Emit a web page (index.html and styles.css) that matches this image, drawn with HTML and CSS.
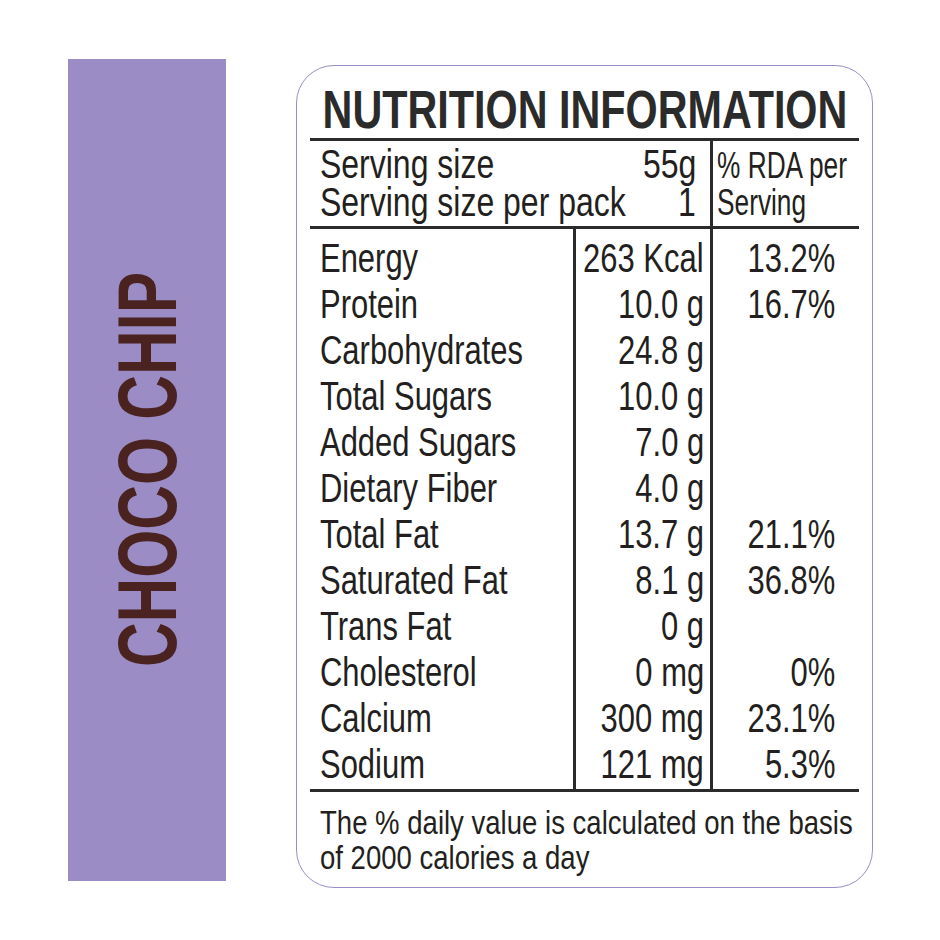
FILE: index.html
```html
<!DOCTYPE html>
<html>
<head>
<meta charset="utf-8">
<link rel="stylesheet" href="styles.css">
</head>
<body>
<div class="page">
  <div class="side"><span class="side-text">CHOCO CHIP</span></div>
  <div class="card">
    <h1 class="title"><span>NUTRITION INFORMATION</span></h1>
    <div class="serving">
      <div class="serving-main">
        <div class="srow"><span class="l">Serving size</span><span class="r">55g</span></div>
        <div class="srow"><span class="l">Serving size per pack</span><span class="r">1</span></div>
      </div>
      <div class="serving-rda">
        <div class="cell"><span>% RDA per</span></div>
        <div class="cell"><span>Serving</span></div>
      </div>
    </div>
    <div class="table">
      <div class="col col-label">
        <div class="cell"><span>Energy</span></div>
        <div class="cell"><span>Protein</span></div>
        <div class="cell"><span>Carbohydrates</span></div>
        <div class="cell"><span>Total Sugars</span></div>
        <div class="cell"><span>Added Sugars</span></div>
        <div class="cell"><span>Dietary Fiber</span></div>
        <div class="cell"><span>Total Fat</span></div>
        <div class="cell"><span>Saturated Fat</span></div>
        <div class="cell"><span>Trans Fat</span></div>
        <div class="cell"><span>Cholesterol</span></div>
        <div class="cell"><span>Calcium</span></div>
        <div class="cell"><span>Sodium</span></div>
      </div>
      <div class="col col-val">
        <div class="cell right"><span>263 Kcal</span></div>
        <div class="cell right"><span>10.0 g</span></div>
        <div class="cell right"><span>24.8 g</span></div>
        <div class="cell right"><span>10.0 g</span></div>
        <div class="cell right"><span>7.0 g</span></div>
        <div class="cell right"><span>4.0 g</span></div>
        <div class="cell right"><span>13.7 g</span></div>
        <div class="cell right"><span>8.1 g</span></div>
        <div class="cell right"><span>0 g</span></div>
        <div class="cell right"><span>0 mg</span></div>
        <div class="cell right"><span>300 mg</span></div>
        <div class="cell right"><span>121 mg</span></div>
      </div>
      <div class="col col-pct">
        <div class="cell right"><span>13.2%</span></div>
        <div class="cell right"><span>16.7%</span></div>
        <div class="cell right"><span>&nbsp;</span></div>
        <div class="cell right"><span>&nbsp;</span></div>
        <div class="cell right"><span>&nbsp;</span></div>
        <div class="cell right"><span>&nbsp;</span></div>
        <div class="cell right"><span>21.1%</span></div>
        <div class="cell right"><span>36.8%</span></div>
        <div class="cell right"><span>&nbsp;</span></div>
        <div class="cell right"><span>0%</span></div>
        <div class="cell right"><span>23.1%</span></div>
        <div class="cell right"><span>5.3%</span></div>
      </div>
    </div>
    <div class="note">
      <div class="cell"><span>The % daily value is calculated on the basis</span></div>
      <div class="cell"><span>of 2000 calories a day</span></div>
    </div>
  </div>
</div>
</body>
</html>
```

FILE: styles.css
```css
* { box-sizing: border-box; }
html, body { margin: 0; padding: 0; background: #fff; }
body {
  width: 940px;
  height: 940px;
  overflow: hidden;
  font-family: "Liberation Sans", Arial, sans-serif;
  color: #231f20;
}
.page {
  display: flex;
  align-items: flex-start;
  padding: 59px 0 0 68px;
}
.side {
  width: 158px;
  height: 822px;
  background: #9b8cc6;
  display: flex;
  align-items: center;
  justify-content: center;
}
.side-text {
  flex: none;
  white-space: nowrap;
  font-weight: bold;
  font-size: 83px;
  line-height: 1;
  color: #4a2321;
  transform: rotate(-90deg) scaleX(0.745);
  margin-top: -2px;
}
.card {
  margin: 6px 0 0 70px;
  width: 577px;
  height: 823px;
  border: 1.5px solid #9b8cc6;
  border-radius: 38px;
  padding: 0 13px;
}
.title {
  margin: 14px 0 0;
  display: flex;
  justify-content: center;
  white-space: nowrap;
  font-size: 54px;
  font-weight: bold;
  line-height: 58px;
  height: 58px;
  color: #2b2b2b;
}
.title span {
  flex: none;
  transform: scaleX(0.765);
}
.cell {
  display: flex;
  white-space: nowrap;
}
.cell > span {
  flex: none;
  transform-origin: left center;
  transform: scaleX(0.755);
}
.cell.right { justify-content: flex-end; }
.cell.right > span { transform-origin: right center; }
.serving {
  display: flex;
  border-top: 3px solid #2b2b2b;
  border-bottom: 3px solid #2b2b2b;
  height: 91px;
}
.serving-main {
  width: 403px;
  padding: 4px 14px 0 10px;
  border-right: 3px solid #2b2b2b;
}
.srow {
  display: flex;
  justify-content: space-between;
  white-space: nowrap;
  font-size: 41px;
  line-height: 38px;
}
.srow .l {
  flex: 0 1 auto;
  min-width: 0;
  transform-origin: left center;
  transform: scaleX(0.78);
}
.srow .r {
  flex: none;
  transform-origin: right center;
  transform: scaleX(0.78);
}
.serving-rda {
  padding: 6px 0 0 4px;
  font-size: 37px;
  line-height: 37px;
}
.serving-rda .cell > span { transform: scaleX(0.71); }
.table {
  display: grid;
  grid-template-columns: 263px 140px 1fr;
  border-bottom: 3px solid #2b2b2b;
  height: 563px;
}
.col {
  padding-top: 6px;
  font-size: 41px;
  line-height: 46px;
}
.col-label { padding-left: 10px; }
.col-val {
  border-left: 3px solid #2b2b2b;
  border-right: 3px solid #2b2b2b;
  padding-right: 6px;
}
.col-pct {
  padding-right: 24px;
}
.note {
  margin: 13px 0 0 10px;
  font-size: 34px;
  line-height: 35px;
}
.note .cell > span { transform: scaleX(0.81); }
```
